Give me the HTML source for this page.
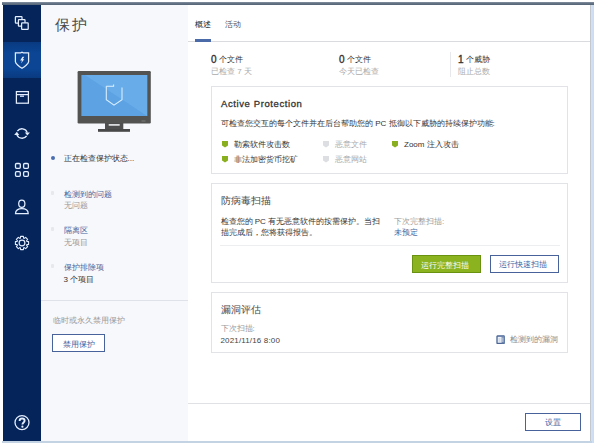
<!DOCTYPE html>
<html><head><meta charset="utf-8">
<style>
*{margin:0;padding:0;box-sizing:border-box}
html,body{width:600px;height:447px;overflow:hidden;background:#fff;font-family:"Liberation Sans",sans-serif;}
.a{position:absolute;white-space:nowrap;line-height:1}
#win{position:absolute;left:2px;top:2px;width:592px;height:441px;background:#fff}
#topb{position:absolute;left:2px;top:2px;width:592px;height:3px;background:linear-gradient(#8391a1,#5d6c7e 60%,#56667a)}
#rb{position:absolute;left:590px;top:2px;width:4px;height:441px;background:linear-gradient(90deg,#c3c8ce 0,#c3c8ce 1px,#d3e2f5 1px,#c9dbf4)}
#bb{position:absolute;left:2px;top:441px;width:590px;height:2px;background:#c4d3e3}
#side{position:absolute;left:3px;top:5px;width:38px;height:436px;background:#04245a}
#act{position:absolute;left:3px;top:42px;width:38px;height:36px;background:linear-gradient(#093a80,#0b4593 30%,#0b4593 75%,#093a80)}
#lp{position:absolute;left:41px;top:5px;width:147px;height:436px;background:#f7f8fc}
.ic{position:absolute;left:12px;width:20px;height:20px}
.card{position:absolute;left:211px;width:357px;border:1px solid #e2e3e6;background:#fff}
.sh{position:absolute;width:6px;height:7px}
</style></head><body>
<div id="win"></div>
<div id="side"></div>
<div id="act"></div>
<div id="lp"></div>
<div id="rb"></div>
<div id="bb"></div>
<div id="topb"></div>

<!-- sidebar icons -->
<svg class="ic" style="top:13px" viewBox="0 0 20 20" fill="none" stroke="#e4eeff" stroke-width="1.25">
<rect x="3.4" y="3.6" width="6.6" height="6.6" rx="0.6"/><rect x="6.4" y="6.6" width="6.6" height="6.6" rx="0.6" fill="#04245a"/><rect x="9.6" y="9.8" width="6.6" height="6.6" rx="0.6" fill="#04245a"/></svg>
<svg class="ic" style="top:50px" viewBox="0 0 20 20" fill="none" stroke="#e4eeff" stroke-width="1.25">
<path d="M3.4 2.8 H8.8 L10 2.2 L11.2 2.8 H16.6 V11.8 C16.6 13.6 12.2 17 10 18.2 C7.8 17 3.4 13.6 3.4 11.8 Z"/><path d="M12.3 6.7 H10.5 L8.2 10.5 H10.1 L8.9 13.4 L12.3 9.2 H10.7 Z" fill="#e4eeff" stroke="none"/></svg>
<svg class="ic" style="top:87px" viewBox="0 0 20 20" fill="none" stroke="#e4eeff" stroke-width="1.25">
<rect x="4.4" y="4.6" width="12" height="11.6"/><line x1="4.4" y1="7.6" x2="16.4" y2="7.6"/><rect x="8" y="8.4" width="4" height="1.6" fill="#b8c8e4" stroke="none"/></svg>
<svg class="ic" style="top:124px" viewBox="0 0 20 20" fill="none" stroke="#e4eeff" stroke-width="1.4">
<path d="M5.4 7.2 A5.5 5.5 0 0 1 15.2 8.6"/><path d="M14.6 11.8 A5.5 5.5 0 0 1 4.8 10.4"/>
<path d="M12.8 8.4 L17.9 8.4 L15.4 11.6 Z" fill="#e4eeff" stroke="none"/><path d="M2.2 11 L7.3 11 L4.8 7.8 Z" fill="#e4eeff" stroke="none"/></svg>
<svg class="ic" style="top:160px" viewBox="0 0 20 20" fill="none" stroke="#e4eeff" stroke-width="1.3">
<rect x="3.5" y="3.5" width="4.8" height="4.8" rx="1.1"/><rect x="11.6" y="3.5" width="4.8" height="4.8" rx="1.1"/><rect x="3.5" y="11.6" width="4.8" height="4.8" rx="1.1"/><rect x="11.6" y="11.6" width="4.8" height="4.8" rx="1.1"/></svg>
<svg class="ic" style="top:197px" viewBox="0 0 20 20" fill="none" stroke="#e4eeff" stroke-width="1.25">
<ellipse cx="9.8" cy="6.8" rx="3.1" ry="3.6"/><path d="M3.5 16.6 C3.5 13.2 6.2 11.7 9.8 11.7 C13.4 11.7 16.2 13.2 16.2 16.6 Z"/></svg>
<svg class="ic" style="top:233px" viewBox="0 0 20 20" fill="none" stroke="#e4eeff" stroke-width="1.15">
<path d="M8.27 4.99 L8.54 3.15 L11.46 3.15 L11.73 4.99 L12.32 5.24 L13.81 4.13 L15.87 6.19 L14.76 7.68 L15.01 8.27 L16.85 8.54 L16.85 11.46 L15.01 11.73 L14.76 12.32 L15.87 13.81 L13.81 15.87 L12.32 14.76 L11.73 15.01 L11.46 16.85 L8.54 16.85 L8.27 15.01 L7.68 14.76 L6.19 15.87 L4.13 13.81 L5.24 12.32 L4.99 11.73 L3.15 11.46 L3.15 8.54 L4.99 8.27 L5.24 7.68 L4.13 6.19 L6.19 4.13 L7.68 5.24 Z" stroke-linejoin="round" transform="translate(10 10) scale(0.96) translate(-10 -10)"/><circle cx="10" cy="10" r="2.9"/></svg>
<svg class="ic" style="top:412.5px" viewBox="0 0 20 20" fill="none" stroke="#e4eeff" stroke-width="1.3">
<circle cx="10" cy="9.6" r="7"/><path d="M7.6 7.9 C7.6 6.3 8.7 5.5 10.1 5.5 C11.6 5.5 12.6 6.4 12.6 7.7 C12.6 9.4 10.4 9.6 10.4 11.6" stroke-width="1.9"/><circle cx="10.4" cy="13.7" r="1.1" fill="#e4eeff" stroke="none"/></svg>

<!-- left panel -->
<div class="a" style="left:55.3px;top:16.6px;font-size:15px;color:#4a4a4a;font-weight:300;letter-spacing:1.6px">保护</div>
<svg style="position:absolute;left:77px;top:71px" width="74" height="61" viewBox="0 0 74 61">
<rect x="0.6" y="0" width="73.2" height="52.4" rx="1.2" fill="#535452"/>
<rect x="4.4" y="4" width="65.8" height="41" fill="#5da3e4"/>
<path d="M8 4 H70.2 V45 Z" fill="#68ade9"/>
<rect x="64.5" y="49.5" width="4" height="1" fill="#7a7c7a"/>
<rect x="28" y="52" width="18.3" height="6.2" fill="#4e4f4e"/>
<rect x="31.7" y="53" width="11" height="1.8" fill="#d9dadb"/>
<rect x="21" y="58" width="32" height="2.8" fill="#474847"/>
<path d="M29.3 15.2 V28.8 L37 34.2 L45 28.8 V16.4 M29.3 15.2 H36.6 V13.6" fill="none" stroke="#dcf0ff" stroke-width="1.05"/>
</svg>
<div style="position:absolute;left:50.5px;top:155.5px;width:4.5px;height:4.5px;border-radius:50%;background:#4a6db0"></div>
<div class="a" style="left:63.5px;top:155px;font-size:8px;color:#333">正在检查保护状态...</div>

<div style="position:absolute;left:51px;top:191px;width:3px;height:4px;border-radius:1px;background:#e6e8ec"></div>
<div class="a" style="left:63.5px;top:190.5px;font-size:8px;color:#44639b">检测到的问题</div>
<div class="a" style="left:63.5px;top:202px;font-size:8px;color:#999">无问题</div>
<div style="position:absolute;left:51px;top:227px;width:3px;height:4px;border-radius:1px;background:#e6e8ec"></div>
<div class="a" style="left:63.5px;top:226.5px;font-size:8px;color:#44639b">隔离区</div>
<div class="a" style="left:63.5px;top:238.5px;font-size:8px;color:#999">无项目</div>
<div style="position:absolute;left:51px;top:264px;width:3px;height:4px;border-radius:1px;background:#e6e8ec"></div>
<div class="a" style="left:63.5px;top:263.5px;font-size:8px;color:#44639b">保护排除项</div>
<div class="a" style="left:63.5px;top:275.5px;font-size:8px;color:#333">3 个项目</div>

<div style="position:absolute;left:41px;top:300px;width:147px;height:1px;background:#dfe2e8"></div>
<div class="a" style="left:52.5px;top:316.5px;font-size:8px;color:#999">临时或永久禁用保护</div>
<div class="a" style="left:52px;top:334px;width:53px;height:18px;border:1.5px solid #48639c;background:#fff;font-size:8px;color:#3d5f9f;text-align:center;line-height:19px">禁用保护</div>

<!-- main -->
<div class="a" style="left:195px;top:21px;font-size:8px;color:#222">概述</div>
<div class="a" style="left:224.5px;top:21px;font-size:8px;color:#555">活动</div>
<div style="position:absolute;left:188px;top:41px;width:402px;height:1px;background:#d9dbde"></div>
<div style="position:absolute;left:195px;top:39px;width:16px;height:2.5px;background:#4a6aa8"></div>

<div class="a" style="left:211px;top:55px;font-size:10px;color:#333;-webkit-text-stroke:0.35px #333">0</div>
<div class="a" style="left:219px;top:56px;font-size:8px;color:#333">个文件</div>
<div class="a" style="left:211px;top:68px;font-size:8px;color:#aaa">已检查 7 天</div>
<div class="a" style="left:339px;top:55px;font-size:10px;color:#333;-webkit-text-stroke:0.35px #333">0</div>
<div class="a" style="left:347px;top:56px;font-size:8px;color:#333">个文件</div>
<div class="a" style="left:339px;top:68px;font-size:8px;color:#aaa">今天已检查</div>
<div style="position:absolute;left:449.5px;top:52px;width:1px;height:25px;background:#e6e8eb"></div>
<div class="a" style="left:458px;top:55px;font-size:10px;color:#333;-webkit-text-stroke:0.35px #333">1</div>
<div class="a" style="left:466px;top:56px;font-size:8px;color:#333">个威胁</div>
<div class="a" style="left:458px;top:68px;font-size:8px;color:#aaa">阻止总数</div>

<div class="card" style="top:86px;height:88px"></div>
<div class="a" style="left:221px;top:99px;font-size:9.5px;color:#333;-webkit-text-stroke:0.3px #333;letter-spacing:0.6px">Active Protection</div>
<div class="a" style="left:221px;top:120px;font-size:8px;color:#333">可检查您交互的每个文件并在后台帮助您的 PC 抵御以下威胁的持续保护功能:</div>
<svg class="sh" style="left:222px;top:141px"><path d="M0 0H6V4.6L3 6.6L0 4.6Z" fill="#8aaf1e"/></svg>
<div class="a" style="left:234px;top:140.5px;font-size:8px;color:#333">勒索软件攻击数</div>
<svg class="sh" style="left:222px;top:156px"><path d="M0 0H6V4.6L3 6.6L0 4.6Z" fill="#8aaf1e"/></svg>
<div class="a" style="left:234px;top:155.5px;font-size:8px;color:#333">非法加密货币挖矿</div>
<svg class="sh" style="left:323px;top:141px"><path d="M0 0H6V4.6L3 6.6L0 4.6Z" fill="#dcdee1"/></svg>
<div class="a" style="left:335px;top:140.5px;font-size:8px;color:#aaa">恶意文件</div>
<svg class="sh" style="left:323px;top:156px"><path d="M0 0H6V4.6L3 6.6L0 4.6Z" fill="#dcdee1"/></svg>
<div class="a" style="left:335px;top:155.5px;font-size:8px;color:#aaa">恶意网站</div>
<svg class="sh" style="left:392px;top:141px"><path d="M0 0H6V4.6L3 6.6L0 4.6Z" fill="#8aaf1e"/></svg>
<div class="a" style="left:404px;top:140.5px;font-size:8px;color:#333">Zoom 注入攻击</div>

<div class="card" style="top:183px;height:100px"></div>
<div class="a" style="left:220.5px;top:196px;font-size:10px;color:#4a4a4a">防病毒扫描</div>
<div class="a" style="left:220.5px;top:216px;font-size:8px;color:#333;line-height:11px">检查您的 PC 有无恶意软件的按需保护。当扫<br>描完成后，您将获得报告。</div>
<div class="a" style="left:394px;top:217.5px;font-size:8px;color:#999">下次完整扫描:</div>
<div class="a" style="left:394px;top:228.5px;font-size:8px;color:#44639b">未预定</div>
<div style="position:absolute;left:220px;top:245px;width:340px;height:1px;background:#eceef0"></div>
<div class="a" style="left:412px;top:255px;width:69px;height:18px;background:#8ab31f;border:1px solid #68920f;font-size:8px;color:#fff;text-align:center;line-height:19.5px;padding-right:3px">运行完整扫描</div>
<div class="a" style="left:490px;top:255px;width:69px;height:18px;background:#fff;border:1.5px solid #48639c;font-size:8px;color:#3d5f9f;text-align:center;line-height:18.5px;padding-right:3px">运行快速扫描</div>

<div class="card" style="top:292px;height:61px"></div>
<div class="a" style="left:220.5px;top:304.5px;font-size:10px;color:#4a4a4a">漏洞评估</div>
<div class="a" style="left:220.5px;top:325px;font-size:8px;color:#999">下次扫描:</div>
<div class="a" style="left:220.5px;top:336.5px;font-size:8px;color:#444;letter-spacing:0.15px">2021/11/16 8:00</div>
<svg style="position:absolute;left:496px;top:334.5px" width="9" height="9" viewBox="0 0 9 9"><rect x="1" y="1" width="7.2" height="7.4" rx="0.4" fill="#eef2f8" stroke="#4a6596" stroke-width="1.3"/><rect x="5.6" y="1" width="2.6" height="7.4" fill="#6d84ad"/><line x1="6.9" y1="2.5" x2="6.9" y2="7" stroke="#e8eef6" stroke-width="0.8"/><line x1="2.5" y1="4" x2="4.5" y2="4" stroke="#9aaccc" stroke-width="0.6"/><line x1="2.5" y1="6" x2="4.5" y2="6" stroke="#9aaccc" stroke-width="0.6"/></svg>
<div class="a" style="left:510px;top:335.5px;font-size:8px;color:#8a8a8a">检测到的漏洞</div>

<div style="position:absolute;left:188px;top:403px;width:402px;height:1px;background:#dfe1e4"></div>
<div class="a" style="left:525px;top:413px;width:56px;height:18px;background:#fff;border:1.5px solid #48639c;font-size:8px;color:#3d5f9f;text-align:center;line-height:18px">设置</div>
</body></html>
